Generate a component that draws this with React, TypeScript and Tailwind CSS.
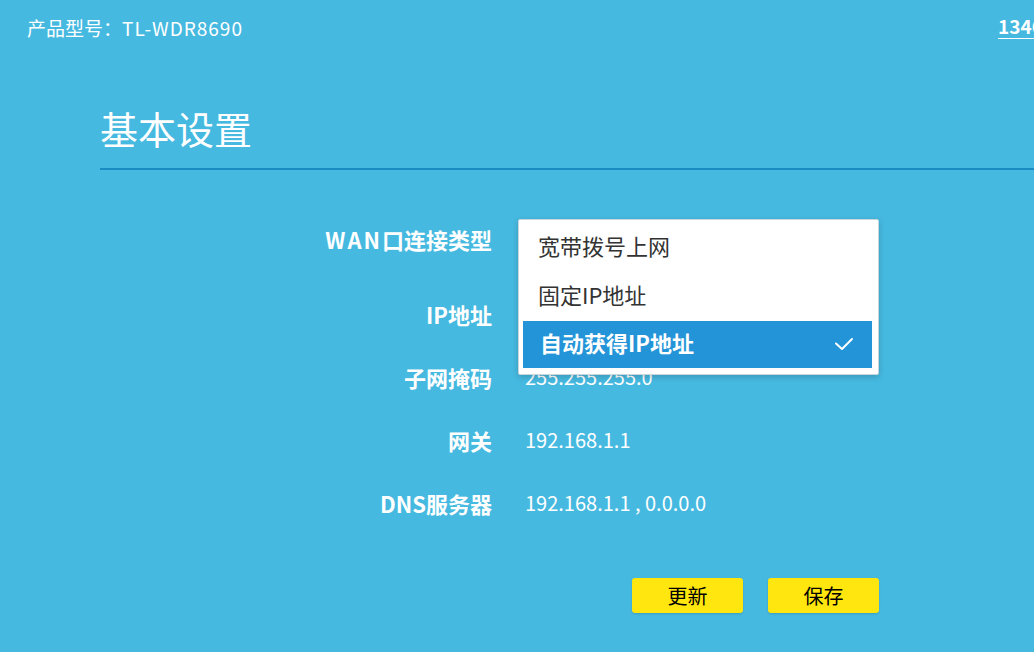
import React from "react";

const Row = ({
  label,
  children,
  className = "",
}: {
  label: React.ReactNode;
  children?: React.ReactNode;
  className?: string;
}) => (
  <div className={`flex h-[63px] items-center ${className}`}>
    <div className="flex w-[492px] justify-end text-[22px] font-semibold leading-none text-white">
      {label}
    </div>
    <div className="relative ml-[33px] flex-1 text-[20px] leading-none text-white">
      {children}
    </div>
  </div>
);

export default function App() {
  return (
    <div className="h-[652px] w-[1034px] overflow-hidden bg-[#46b9e0] font-['Noto_Sans_CJK_SC',sans-serif]">
      {/* header */}
      <div className="flex h-[54px] items-center">
        <div className="pl-[27px] text-[19px] leading-none text-white">
          产品型号：<span className="tracking-[1px]">TL-WDR8690</span>
        </div>
        <div className="ml-auto w-[36px] overflow-hidden">
          <span className="whitespace-nowrap text-[19px] font-semibold leading-none text-white underline decoration-2 underline-offset-[4px]">
            13466668888
          </span>
        </div>
      </div>

      {/* title */}
      <div className="ml-[100px] mt-[55px] text-[38px] leading-none text-white">基本设置</div>
      <div className="ml-[100px] mt-[21px] h-[2px] bg-[#1a8cc2]" />

      {/* form */}
      <div className="mt-[37px] flex flex-col">
        <Row label={<span><span className="tracking-[2px]">WAN</span>口连接类型</span>} className="mb-[12px]">
          <div className="absolute left-[-7px] top-[-20px] z-10 w-[361px] rounded-[2px] border border-[#c9d6dc] bg-white pb-[6px] pl-[4px] pr-[6px] pt-[5px] shadow-[0_2px_6px_rgba(0,0,0,0.18)]">
            <div className="flex h-[48px] items-center pb-[8px] pl-[15px] text-[22px] leading-none text-[#333]">
              宽带拨号上网
            </div>
            <div className="flex h-[48px] items-center pb-[6px] pl-[15px] text-[22px] leading-none text-[#333]">
              固定IP地址
            </div>
            <div className="flex h-[47px] items-center justify-between bg-[#2394d8] pl-[17px] pr-[18px] text-[22px] font-semibold leading-none text-white">
              <span className="pb-[5px]">自动获得IP地址</span>
              <svg width="20" height="14" viewBox="0 0 20 14" fill="none">
                <path d="M2 6.5 L8 12 L18 2" stroke="white" strokeWidth="2" strokeLinecap="round" strokeLinejoin="round" />
              </svg>
            </div>
          </div>
        </Row>
        <Row label="IP地址" />
        <Row label="子网掩码">255.255.255.0</Row>
        <Row label="网关">192.168.1.1</Row>
        <Row label="DNS服务器">192.168.1.1 , 0.0.0.0</Row>
      </div>

      {/* buttons */}
      <div className="ml-[632px] mt-[44px] flex gap-[25px]">
        <button className="flex h-[35px] w-[111px] items-center justify-center rounded-[3px] bg-[#ffe60f] text-[20px] leading-none text-black shadow-[0_1px_2px_rgba(0,0,0,0.15)]">
          更新
        </button>
        <button className="flex h-[35px] w-[111px] items-center justify-center rounded-[3px] bg-[#ffe60f] text-[20px] leading-none text-black shadow-[0_1px_2px_rgba(0,0,0,0.15)]">
          保存
        </button>
      </div>
    </div>
  );
}
